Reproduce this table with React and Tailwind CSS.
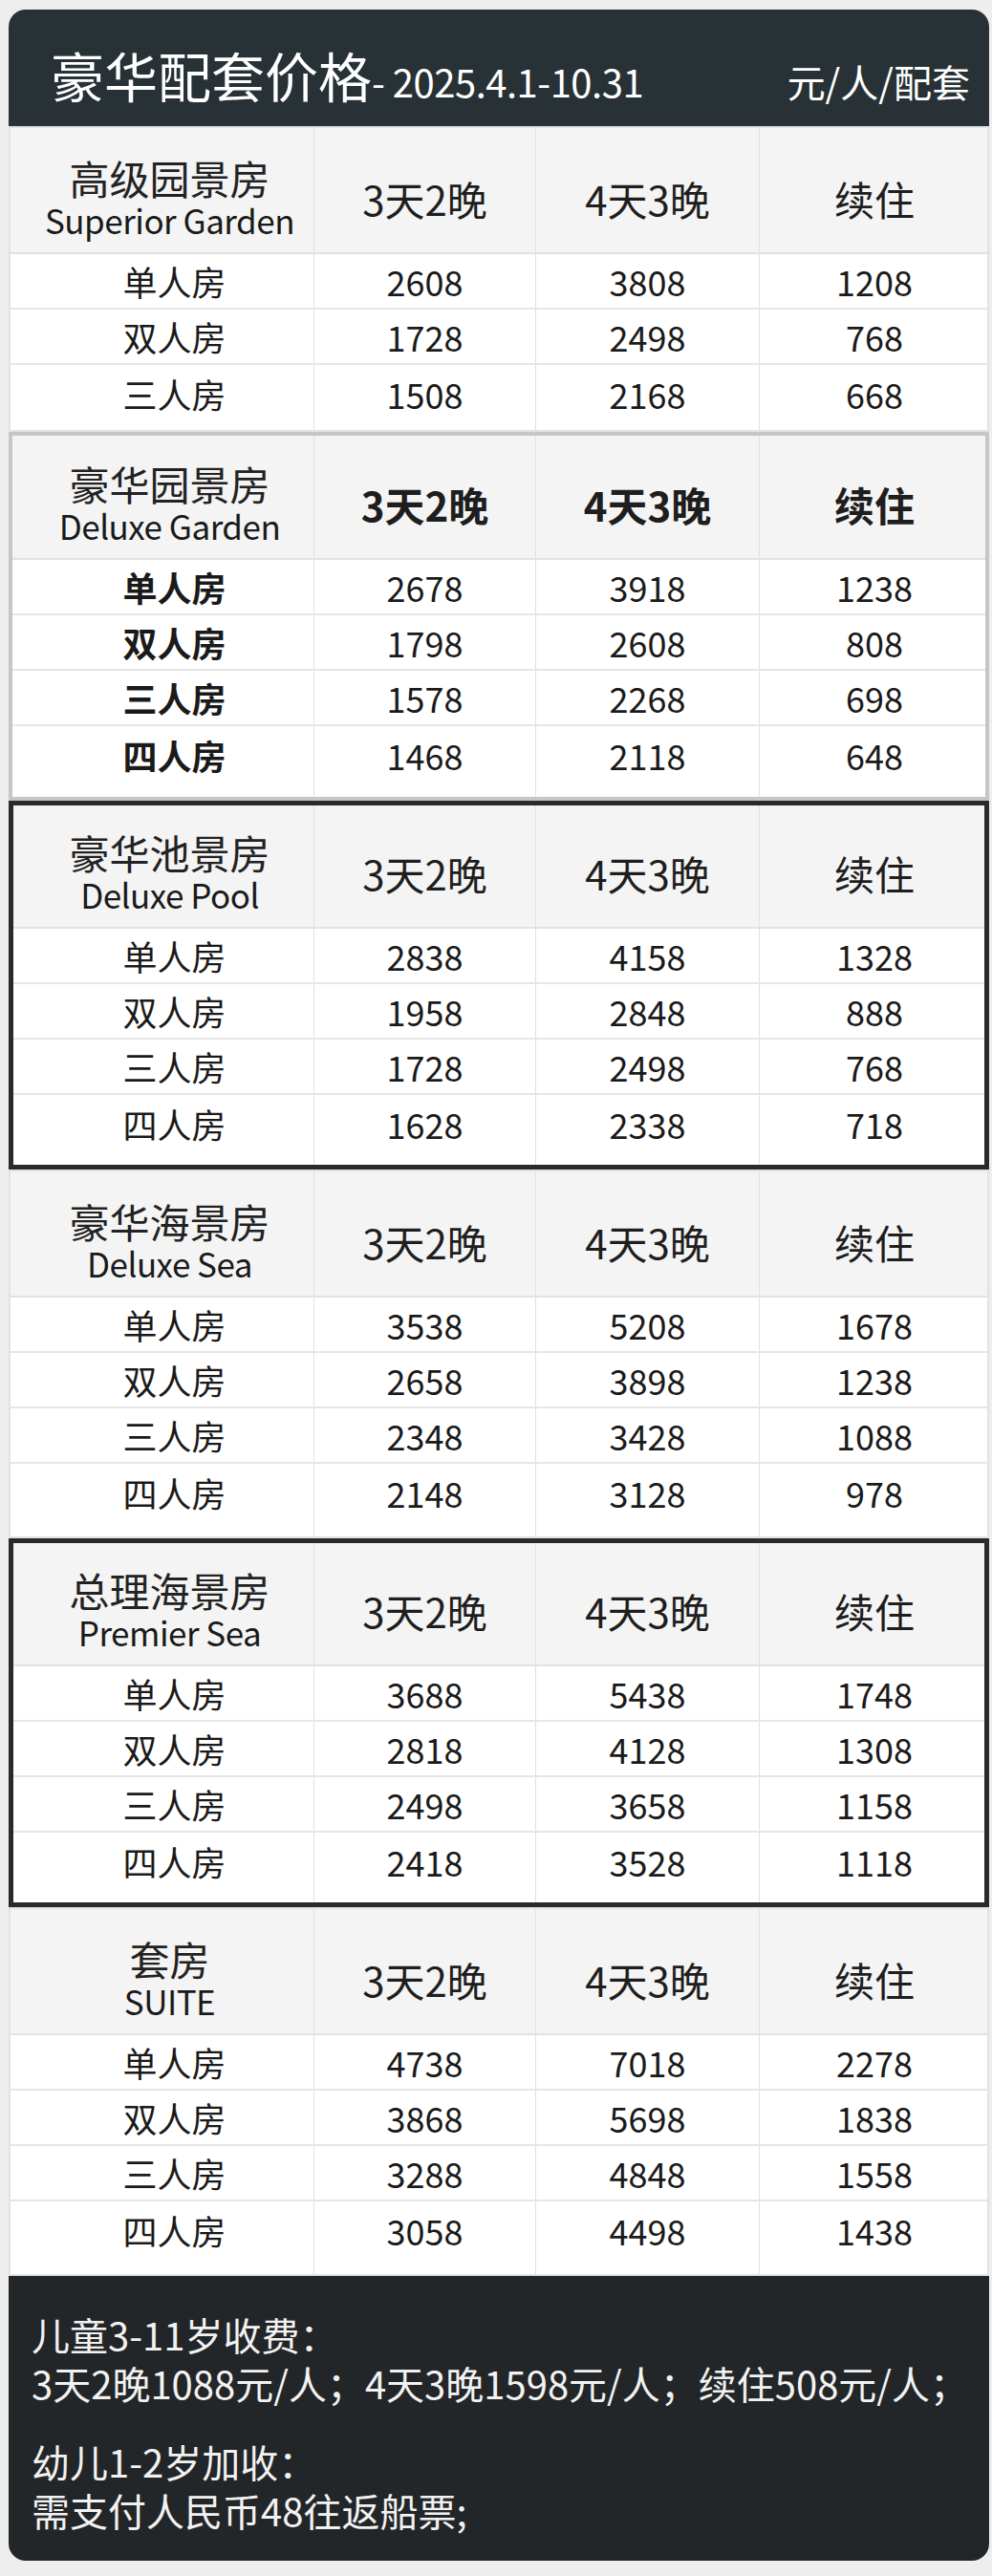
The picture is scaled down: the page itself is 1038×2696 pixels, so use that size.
import React from "react";

const sections = [
  {
    cn: "高级园景房",
    en: "Superior Garden",
    variant: "plain",
    rows: [
      ["单人房", "2608", "3808", "1208"],
      ["双人房", "1728", "2498", "768"],
      ["三人房", "1508", "2168", "668"],
    ],
  },
  {
    cn: "豪华园景房",
    en: "Deluxe Garden",
    variant: "gray",
    rows: [
      ["单人房", "2678", "3918", "1238"],
      ["双人房", "1798", "2608", "808"],
      ["三人房", "1578", "2268", "698"],
      ["四人房", "1468", "2118", "648"],
    ],
  },
  {
    cn: "豪华池景房",
    en: "Deluxe Pool",
    variant: "dark",
    rows: [
      ["单人房", "2838", "4158", "1328"],
      ["双人房", "1958", "2848", "888"],
      ["三人房", "1728", "2498", "768"],
      ["四人房", "1628", "2338", "718"],
    ],
  },
  {
    cn: "豪华海景房",
    en: "Deluxe Sea",
    variant: "plain",
    rows: [
      ["单人房", "3538", "5208", "1678"],
      ["双人房", "2658", "3898", "1238"],
      ["三人房", "2348", "3428", "1088"],
      ["四人房", "2148", "3128", "978"],
    ],
  },
  {
    cn: "总理海景房",
    en: "Premier Sea",
    variant: "dark",
    rows: [
      ["单人房", "3688", "5438", "1748"],
      ["双人房", "2818", "4128", "1308"],
      ["三人房", "2498", "3658", "1158"],
      ["四人房", "2418", "3528", "1118"],
    ],
  },
  {
    cn: "套房",
    en: "SUITE",
    variant: "plain",
    rows: [
      ["单人房", "4738", "7018", "2278"],
      ["双人房", "3868", "5698", "1838"],
      ["三人房", "3288", "4848", "1558"],
      ["四人房", "3058", "4498", "1438"],
    ],
  },
];

const outlineByVariant = {
  plain: "outline-2 outline-offset-[-2px] outline-[#e2e2e2]",
  gray: "outline-[4px] outline-offset-[-4px] outline-[#c6c6c6]",
  dark: "outline-[5px] outline-offset-[-5px] outline-[#2a2a2a]",
};

const GRID = "grid grid-cols-[320px_232px_234px_240px]";

function Section({ s }) {
  const bold = s.variant === "gray";
  const rowCount = s.rows.length;
  return (
    <div className={`bg-white ${outlineByVariant[s.variant]}`}>
      <div className={`${GRID} h-[134px] bg-[#f4f4f4] border-b-2 border-[#e2e2e2]`}>
        <div className="flex items-center justify-center pt-[16px] pl-[18px] border-r border-[#e0e0e0]">
          <div className="whitespace-pre-line text-center text-[35px] leading-[42px] tracking-[-0.5px] text-[#1a1a1a] first-line:text-[42px] first-line:leading-[47px] first-line:tracking-normal first-line:text-[#222]">
            {s.cn + "\n" + s.en}
          </div>
        </div>
        {["3天2晚", "4天3晚", "续住"].map((h, i) => (
          <div
            key={h}
            className={`flex items-center justify-center pt-[18px] text-[42px] text-[#1e1e1e] ${
              i < 2 ? "border-r border-[#e0e0e0]" : ""
            } ${bold ? "font-bold" : "font-normal"}`}
          >
            {h}
          </div>
        ))}
      </div>
      {s.rows.map((r, ri) => {
        const last = ri === rowCount - 1;
        const rowCls = last
          ? rowCount === 3
            ? "h-[70px]"
            : "h-[78px]"
          : "h-[58px] border-b-2 border-[#e6e6e6]";
        return (
          <div key={ri} className={`${GRID} ${rowCls}`}>
            {r.map((c, ci) => (
              <div
                key={ci}
                className={`flex justify-center text-[36px] text-[#1a1a1a] ${
                  ci < 3 ? "border-r border-[#e0e0e0]" : ""
                } ${ci === 0 ? "pl-[28px]" : ""} ${bold && ci === 0 ? "font-semibold" : ""}`}
              >
                <span className={`flex items-center ${last ? "h-[60px]" : "h-[56px]"}`}>{c}</span>
              </div>
            ))}
          </div>
        );
      })}
    </div>
  );
}

export default function App() {
  return (
    <div className="w-[1038px] h-[2696px] bg-[#eeeeee] pt-[10px] pl-[9px] font-['Noto_Sans_CJK_SC','Noto_Sans',sans-serif]">
      <div className="w-[1026px]">
        <div className="h-[122px] bg-[#283236] rounded-t-[18px] flex items-baseline justify-between pl-[44px] pr-[20px] pt-[38px] text-white">
          <div className="flex items-baseline">
            <span className="text-[56px] leading-[60px]">豪华配套价格</span>
            <span className="text-[40px] leading-[60px] tracking-[-0.5px]">- 2025.4.1-10.31</span>
          </div>
          <span className="text-[40px] leading-[60px]">元/人/配套</span>
        </div>
        {sections.map((s, i) => (
          <Section key={i} s={s} />
        ))}
        <div className="h-[298px] bg-[#232628] rounded-b-[18px] px-[24px] pt-[36px] text-[40px] leading-[51px] text-[#f2f2f2]">
          <div className="whitespace-pre">{"儿童3-11岁收费：\n3天2晚1088元/人；4天3晚1598元/人；续住508元/人；"}</div>
          <div className="mt-[31px] whitespace-pre">{"幼儿1-2岁加收：\n需支付人民币48往返船票;"}</div>
        </div>
      </div>
    </div>
  );
}
